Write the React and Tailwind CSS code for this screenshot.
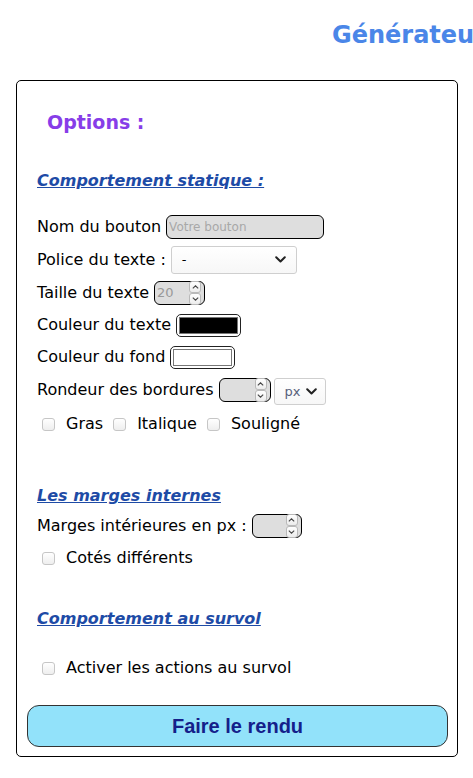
import React from "react";

const font = { fontFamily: "'DejaVu Sans', sans-serif" };

function Chevron({ className = "" }) {
  return (
    <svg width="11" height="7" viewBox="0 0 11 7" className={className}>
      <path d="M1.2 1.2 L5.5 5.5 L9.8 1.2" fill="none" stroke="#222" strokeWidth="2" strokeLinecap="round" strokeLinejoin="round" />
    </svg>
  );
}

function Check({ label, className = "" }) {
  return (
    <span className={"flex items-center " + className}>
      <span className="w-[13px] h-[13px] rounded-[3px] border border-[#c6c6c6] bg-gradient-to-b from-white to-[#eeeeee] shrink-0" />
      <span className="ml-[11px]">{label}</span>
    </span>
  );
}

function Spin({ up }) {
  return (
    <span className="flex-1 border border-[#b9b9b9] rounded-[3px] bg-gradient-to-b from-white to-[#ececec] flex items-center justify-center">
      <svg width="7" height="4" viewBox="0 0 7 4">
        <path d={up ? "M0.8 3.4 L3.5 0.8 L6.2 3.4" : "M0.8 0.6 L3.5 3.2 L6.2 0.6"} fill="none" stroke="#444" strokeWidth="1.1" />
      </svg>
    </span>
  );
}

function NumberInput({ w, value }) {
  return (
    <span className={`${w} relative h-[24px] bg-[#dedede] border border-black rounded-[6px] pl-[2px] text-[13px] leading-[22px] text-[#999] flex`}>
      <span>{value}</span>
      <span className="absolute right-[3px] top-[-1px] bottom-[-1px] w-[12px] flex flex-col">
        <Spin up />
        <Spin />
      </span>
    </span>
  );
}

function Swatch({ color }) {
  return (
    <span className="w-[65px] h-[23px] border border-[#222] rounded-[5px] bg-white p-[2px] flex">
      <span className="flex-1 border border-[#777]" style={{ background: color }} />
    </span>
  );
}

export default function App() {
  return (
    <div className="w-[473px] h-[778px] bg-white overflow-hidden text-black" style={font}>
      <div className="h-[80px] pt-[21px] pl-[332px] whitespace-nowrap overflow-hidden">
        <span className="text-[24px] leading-[28px] font-bold text-[#4a86e8]">Générateur de boutons</span>
      </div>
      <div className="ml-[16px] w-[442px] border border-black rounded-[5px] flex flex-col text-[16px] leading-[20px]">
        <div className="mt-[29px] h-[24px] leading-[24px] pl-[30px] text-[19px] font-bold text-[#873de8]">Options :</div>
        <div className="mt-[37px] h-[20px] pl-[20px]">
          <span className="font-bold italic underline text-[#1e4ba6]">Comportement statique :</span>
        </div>
        <div className="mt-[19px] pl-[20px] flex flex-col">
          <div className="h-[33px] flex items-center">
            <span>Nom du bouton</span>
            <input
              placeholder="Votre bouton"
              className="ml-[5px] w-[158px] h-[24px] bg-[#dedede] border border-black rounded-[6px] px-[2px] text-[12px] placeholder:text-[#a8a8a8] outline-none"
              style={font}
            />
          </div>
          <div className="h-[33px] flex items-center">
            <span>Police du texte :</span>
            <span className="ml-[5px] w-[126px] h-[28px] border border-[#cfcfcf] rounded-[3px] bg-gradient-to-b from-white to-[#f7f7f7] flex items-center justify-between pl-[10px] pr-[10px] text-[13px]">
              <span>-</span>
              <Chevron />
            </span>
          </div>
          <div className="h-[34px] flex items-center">
            <span>Taille du texte</span>
            <span className="ml-[5px] flex"><NumberInput w="w-[51px]" value="20" /></span>
          </div>
          <div className="h-[30px] flex items-center">
            <span>Couleur du texte</span>
            <span className="ml-[5px] flex"><Swatch color="#000" /></span>
          </div>
          <div className="h-[34px] flex items-center">
            <span>Couleur du fond</span>
            <span className="ml-[5px] flex"><Swatch color="#fff" /></span>
          </div>
          <div className="h-[32px] flex items-center">
            <span>Rondeur des bordures</span>
            <span className="ml-[5px] flex"><NumberInput w="w-[52px]" /></span>
            <span className="ml-[3px] w-[52px] h-[27px] mt-[3px] border border-[#cfcfcf] rounded-[3px] bg-gradient-to-b from-white to-[#f7f7f7] flex items-center pl-[10px] text-[13px] text-[#56607a]">
              <span>px</span>
              <Chevron className="ml-[6px]" />
            </span>
          </div>
          <div className="h-[36px] flex items-center pl-[5px]">
            <Check label="Gras" />
            <Check label="Italique" className="ml-[10px]" />
            <Check label="Souligné" className="ml-[10px]" />
          </div>
        </div>
        <div className="mt-[44px] h-[20px] pl-[20px]">
          <span className="font-bold italic underline text-[#1e4ba6]">Les marges internes</span>
        </div>
        <div className="pl-[20px] flex flex-col mt-[3px]">
          <div className="h-[33px] flex items-center">
            <span>Marges intérieures en px :</span>
            <span className="ml-[5px] flex"><NumberInput w="w-[50px]" /></span>
          </div>
          <div className="h-[32px] flex items-center pl-[5px]">
            <Check label="Cotés différents" />
          </div>
        </div>
        <div className="mt-[35px] h-[20px] pl-[20px]">
          <span className="font-bold italic underline text-[#1e4ba6]">Comportement au survol</span>
        </div>
        <div className="mt-[23px] h-[32px] flex items-center pl-[25px]">
          <Check label="Activer les actions au survol" />
        </div>
        <button
          className="mt-[21px] ml-[10px] w-[421px] h-[42px] bg-[#92e2fa] border border-[#333] rounded-[12px] text-[20px] font-bold text-[#14208a]"
          style={{ fontFamily: "'Liberation Sans', Arial, sans-serif" }}
        >
          Faire le rendu
        </button>
        <div className="h-[9px]" />
      </div>
    </div>
  );
}
